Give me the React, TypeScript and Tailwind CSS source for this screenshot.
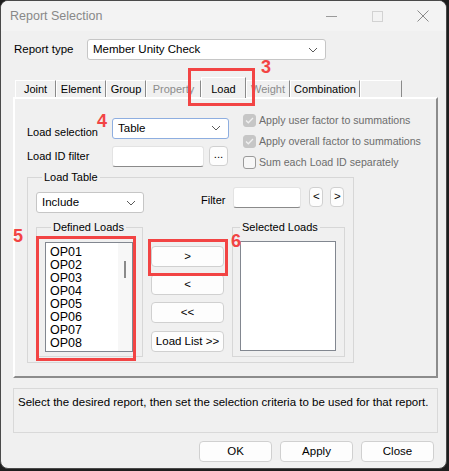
import React from 'react';

const RED = 'border-[#f24444]';

function Chevron() {
  return (
    <svg width="10" height="6" viewBox="0 0 10 6" className="shrink-0">
      <path d="M1 1l4 4 4-4" fill="none" stroke="#5a5a5a" strokeWidth="1" />
    </svg>
  );
}

function Combo({ value, className }: { value: string; className: string }) {
  return (
    <div className={`flex h-[21px] items-center justify-between rounded-[3px] border bg-white pl-[5px] pr-[7px] text-[11.5px] ${className}`}>
      <span>{value}</span>
      <Chevron />
    </div>
  );
}

function TextBox({ className }: { className: string }) {
  return <div className={`h-[21px] rounded-[3px] border border-[#e3e3e3] border-b-[#8a8a8a] bg-white ${className}`} />;
}

function Btn({ label, className = '' }: { label: string; className?: string }) {
  return (
    <div className={`flex items-center justify-center rounded-[4px] border border-[#d0d0d0] bg-[#fdfdfd] text-[11.5px] ${className}`}>
      {label}
    </div>
  );
}

function Check({ label, checked }: { label: string; checked?: boolean }) {
  return (
    <div className="flex h-[21px] items-center gap-[3px] text-[10.6px] text-[#6d6d6d]">
      <div
        className={`flex h-[13px] w-[13px] items-center justify-center rounded-[3px] border ${
          checked ? 'border-[#c6c6c6] bg-[#c6c6c6]' : 'border-[#9a9a9a] bg-[#f7f7f7]'
        }`}
      >
        {checked && (
          <svg width="9" height="7" viewBox="0 0 9 7">
            <path d="M1 3.5l2.3 2.3L8 1" fill="none" stroke="#f0f0f0" strokeWidth="1.3" />
          </svg>
        )}
      </div>
      <span>{label}</span>
    </div>
  );
}

const tabs = [
  { label: 'Joint', w: 'w-[41px]' },
  { label: 'Element', w: 'w-[50px]' },
  { label: 'Group', w: 'w-[40px]' },
  { label: 'Property', w: 'w-[55px]', disabled: true },
  { label: 'Load', w: 'w-[45px]', active: true },
  { label: 'Weight', w: 'w-[44px]', disabled: true },
  { label: 'Combination', w: 'w-[70px]' },
  { label: '', w: 'w-[42px]' },
];

const loads = ['OP01', 'OP02', 'OP03', 'OP04', 'OP05', 'OP06', 'OP07', 'OP08'];

export default function App() {
  return (
    <div className="relative h-[471px] w-[449px] overflow-hidden bg-[#1e1e1e] text-black [font-family:'Liberation_Sans',Arial,sans-serif]">
      <div className="h-[469px] w-[447px] overflow-hidden rounded-[8px] border border-[#4a4a4a] bg-[#f0f0f0]">
        {/* Title bar */}
        <div className="flex h-[30px] items-center justify-between bg-[#f3f3f3] pl-[9px]">
          <span className="text-[12.5px] text-[#888888]">Report Selection</span>
          <div className="flex h-full items-center">
            <div className="flex w-[46px] justify-center">
              <div className="h-px w-[11px] bg-[#9a9a9a]" />
            </div>
            <div className="flex w-[46px] justify-center">
              <div className="h-[11px] w-[11px] border border-[#d2d2d2]" />
            </div>
            <div className="flex w-[46px] justify-center">
              <svg width="12" height="12" viewBox="0 0 12 12">
                <path d="M0.5 0.5l11 11M11.5 0.5l-11 11" stroke="#8a8a8a" strokeWidth="1" />
              </svg>
            </div>
          </div>
        </div>

        <div className="px-[12px]">
          {/* Report type */}
          <div className="mt-[8px] flex items-center">
            <span className="w-[74px] pl-[1px] text-[11.5px]">Report type</span>
            <Combo value="Member Unity Check" className="w-[239px] border-[#c6c6c6]" />
          </div>

          {/* Tabs */}
          <div className="mt-[17px] flex h-[20px] items-end pl-[2px]">
            {tabs.map((t) => (
              <div
                key={t.w + t.label}
                className={`flex items-center justify-center border-l border-t border-r border-l-white border-t-white border-r-[#8a8a8a] text-[11px] ${t.w} ${
                  t.active ? 'relative z-10 -mb-px h-[21px] bg-[#f0f0f0] pt-[2px]' : 'h-[17px]'
                } ${t.disabled ? 'text-[#8c8c8c]' : ''}`}
              >
                {t.label}
              </div>
            ))}
          </div>

          {/* Tab panel */}
          <div className="h-[281px] w-[425px] border-2 border-l-white border-t-white border-r-[#8c8c8c] border-b-[#8c8c8c] pl-[12px] pt-[17px]">
            <div className="flex h-[54px] items-start">
              <div className="w-[202px]">
                <div className="flex items-center">
                  <span className="w-[85px] pt-[8px] text-[11px]">Load selection</span>
                  <Combo value="Table" className="w-[117px] border-[#8eaee0]" />
                </div>
                <div className="mt-[5px] flex items-center">
                  <span className="w-[85px] text-[11px]">Load ID filter</span>
                  <TextBox className="w-[92px]" />
                  <Btn label="..." className="ml-[5px] h-[20px] w-[19px] pb-[3px]" />
                </div>
              </div>
              <div className="-mt-[6px] ml-[14px]">
                <Check label="Apply user factor to summations" checked />
                <Check label="Apply overall factor to summations" checked />
                <Check label="Sum each Load ID separately" />
              </div>
            </div>

            {/* Load Table group */}
            <fieldset className="h-[193px] w-[327px] border border-[#d7d7d7] px-[8px]">
              <legend className="ml-[6px] px-[2px] text-[11px] leading-[14px]">Load Table</legend>
              <div className="flex h-[28px] items-start">
                <Combo value="Include" className="mt-[8px] h-[20px] w-[108px] border-[#c6c6c6]" />
                <span className="ml-[57px] mt-[8px] text-[11px]">Filter</span>
                <TextBox className="ml-[8px] mt-[3px] w-[68px]" />
                <Btn label="<" className="ml-[8px] mt-[3px] h-[20px] w-[14px] pb-[1px]" />
                <Btn label=">" className="ml-[7px] mt-[3px] h-[20px] w-[14px] pb-[1px]" />
              </div>

              <div className="mt-[8px] flex items-start">
                <fieldset className="h-[137px] w-[107px] border border-[#d7d7d7] pl-[8px]">
                  <legend className="ml-[6px] px-[2px] text-[11px] leading-[14px]">Defined Loads</legend>
                  <div className="mt-[8px] flex h-[110px] w-[88px] border border-[#828790] bg-white">
                    <div className="flex-1 pl-[4px] pt-[3px] text-[12.5px] leading-[13px]">
                      {loads.map((l) => (
                        <div key={l}>{l}</div>
                      ))}
                    </div>
                    <div className="w-[14px] bg-[#f7f7f7] pl-[6px] pt-[18px]">
                      <div className="h-[17px] w-[2px] bg-[#8a8a8a]" />
                    </div>
                  </div>
                </fieldset>

                <div className="ml-[8px] mt-[26px] flex w-[73px] flex-col gap-[7px]">
                  <Btn label=">" className="h-[21px]" />
                  <Btn label="<" className="h-[21px]" />
                  <Btn label="<<" className="h-[21px]" />
                  <Btn label="Load List >>" className="mt-[1px] h-[21px]" />
                </div>

                <fieldset className="ml-[8px] h-[137px] w-[113px] border border-[#d7d7d7] pl-[7px]">
                  <legend className="px-[2px] text-[11px] leading-[14px]">Selected Loads</legend>
                  <div className="mt-[7px] h-[110px] w-[96px] border border-[#828790] bg-white" />
                </fieldset>
              </div>
            </fieldset>
          </div>

          {/* Info box */}
          <div className="mt-[10px] h-[45px] w-[425px] border border-[#d9d9d9] pl-[4px] pt-[5px] text-[11.5px]">
            Select the desired report, then set the selection criteria to be used for that report.
          </div>

          {/* Bottom buttons */}
          <div className="mt-[8px] flex justify-end gap-[8px]">
            <Btn label="OK" className="h-[21px] w-[73px]" />
            <Btn label="Apply" className="h-[21px] w-[73px]" />
            <Btn label="Close" className="h-[21px] w-[73px]" />
          </div>
        </div>
      </div>

      {/* Annotations */}
      <div className={`absolute left-[188px] top-[68px] h-[38px] w-[67px] border-[3px] ${RED}`} />
      <span className="absolute left-[261px] top-[57px] text-[18px] font-bold leading-[20px] text-[#f24444]">3</span>
      <span className="absolute left-[97px] top-[111px] text-[18px] font-bold leading-[20px] text-[#f24444]">4</span>
      <div className={`absolute left-[36px] top-[236px] h-[125px] w-[100px] border-[3px] ${RED}`} />
      <span className="absolute left-[13px] top-[226px] text-[18px] font-bold leading-[20px] text-[#f24444]">5</span>
      <div className={`absolute left-[148px] top-[239px] h-[37px] w-[80px] border-[3px] ${RED}`} />
      <span className="absolute left-[231px] top-[231px] text-[18px] font-bold leading-[20px] text-[#f24444]">6</span>
    </div>
  );
}
